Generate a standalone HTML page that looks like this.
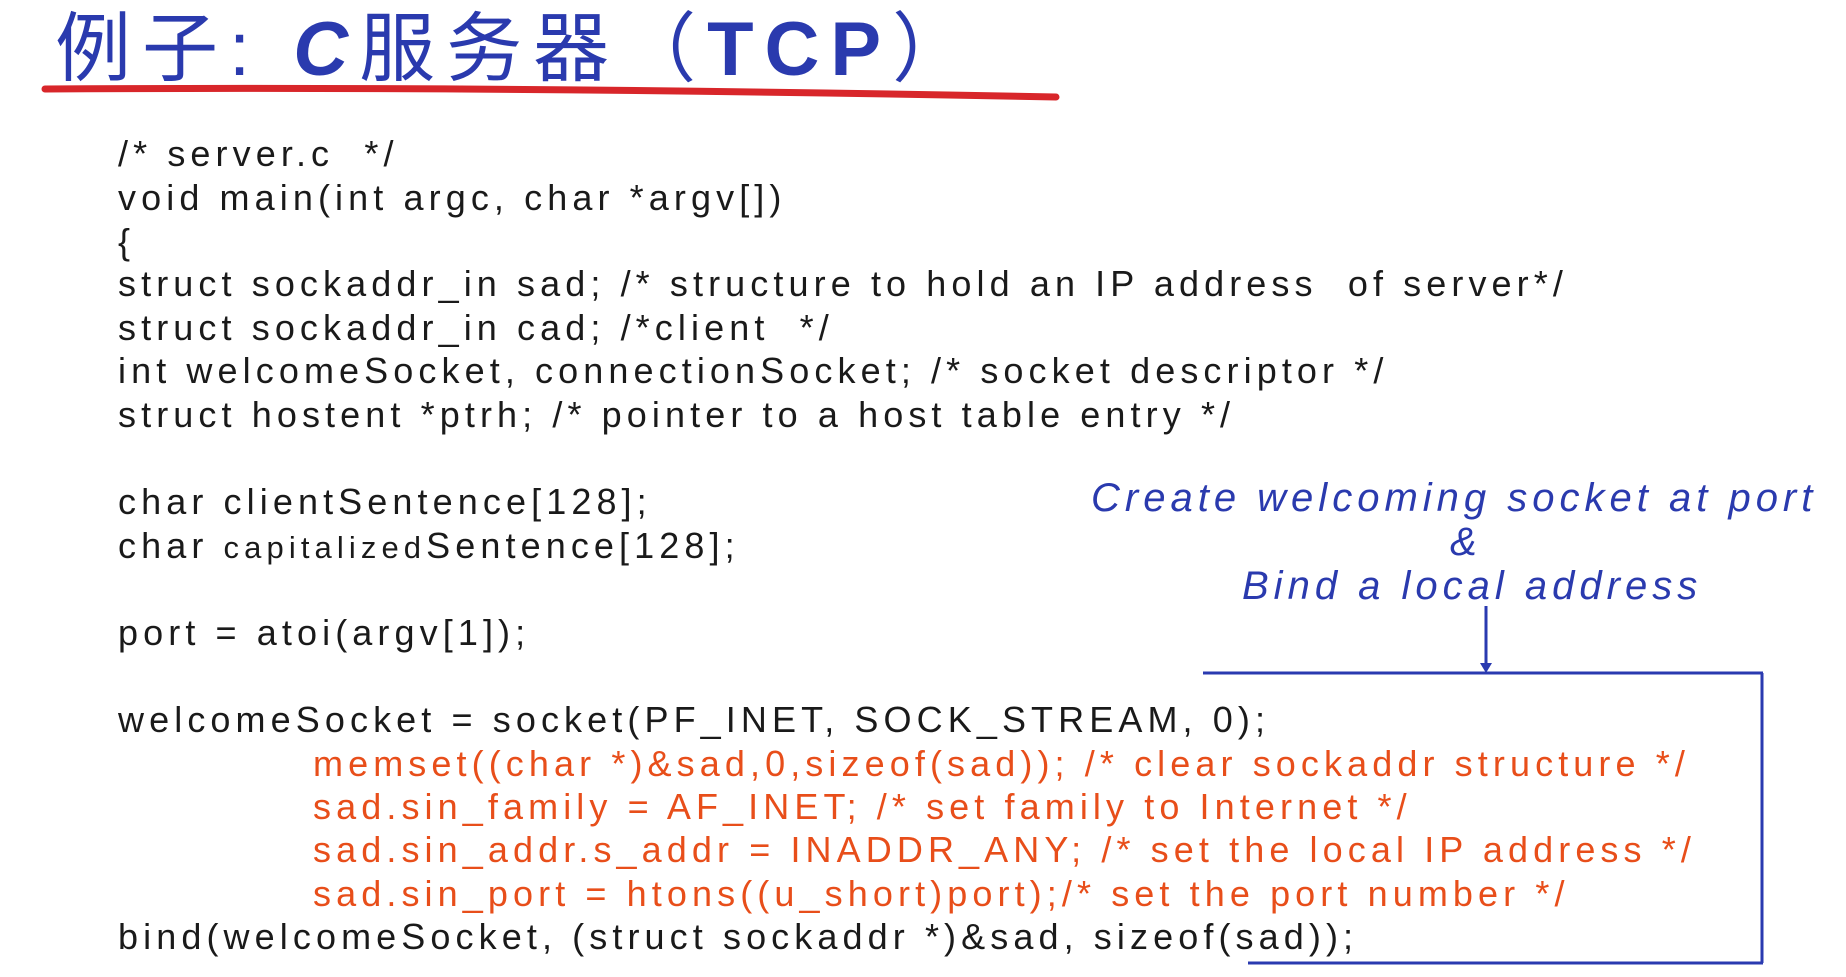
<!DOCTYPE html>
<html><head><meta charset="utf-8"><style>
body{margin:0;width:1846px;height:977px;background:#fff;position:relative;overflow:hidden;font-family:"Liberation Sans","Noto Sans CJK SC",sans-serif}
.l{position:absolute;left:118px;font-size:36px;line-height:1;letter-spacing:5.1px;color:#1a1a1a;white-space:pre}
.o{left:313px;color:#e84e1a}
.t{position:absolute;left:55px;top:12px;font-size:76px;line-height:1;color:#2a3aae;white-space:pre;letter-spacing:11px}
.b{position:absolute;font-family:"Liberation Sans",sans-serif;font-style:italic;font-size:40px;color:#2a3aae;white-space:pre;line-height:1;letter-spacing:5px}
</style></head><body>
<div class="t">例子: <b style="font-family:'Liberation Sans',sans-serif;font-style:italic">C</b>服务器（<b style="font-family:'Liberation Sans',sans-serif">TCP</b>）</div>
<svg width="1846" height="977" style="position:absolute;left:0;top:0">
<path d="M45 89 Q500 86 1056 97" stroke="#d8262a" stroke-width="7" fill="none" stroke-linecap="round"/>
<g stroke="#2a3ab0" stroke-width="3" fill="none">
<line x1="1486" y1="606" x2="1486" y2="669"/>
<line x1="1203" y1="673" x2="1763" y2="673"/>
<line x1="1762" y1="673" x2="1762" y2="963"/>
<line x1="1248" y1="963" x2="1763" y2="963"/>
</g>
<path d="M1480 663 L1486 673 L1492 663Z" fill="#2a3ab0"/>
</svg>
<div class="l" style="top:136px">/* server.c  */</div>
<div class="l" style="top:180px">void main(int argc, char *argv[])</div>
<div class="l" style="top:224px">{</div>
<div class="l" style="top:266px">struct sockaddr_in sad; /* structure to hold an IP address  of server*/</div>
<div class="l" style="top:310px">struct sockaddr_in cad; /*client  */</div>
<div class="l" style="top:353px">int welcomeSocket, connectionSocket; /* socket descriptor */</div>
<div class="l" style="top:397px">struct hostent *ptrh; /* pointer to a host table entry */</div>
<div class="l" style="top:484px">char clientSentence[128];</div>
<div class="l" style="top:528px">char <span style="font-size:31px">capitalized</span>Sentence[128];</div>
<div class="l" style="top:615px">port = atoi(argv[1]);</div>
<div class="l" style="top:702px">welcomeSocket = socket(PF_INET, SOCK_STREAM, 0);</div>
<div class="l o" style="top:746px">memset((char *)&amp;sad,0,sizeof(sad)); /* clear sockaddr structure */</div>
<div class="l o" style="top:789px">sad.sin_family = AF_INET; /* set family to Internet */</div>
<div class="l o" style="top:832px">sad.sin_addr.s_addr = INADDR_ANY; /* set the local IP address */</div>
<div class="l o" style="top:876px">sad.sin_port = htons((u_short)port);/* set the port number */</div>
<div class="l" style="top:919px">bind(welcomeSocket, (struct sockaddr *)&amp;sad, sizeof(sad));</div>
<div class="b" style="left:1091px;top:478px">Create welcoming socket at port</div>
<div class="b" style="left:1450px;top:522px">&amp;</div>
<div class="b" style="left:1242px;top:566px">Bind a local address</div>
</body></html>
